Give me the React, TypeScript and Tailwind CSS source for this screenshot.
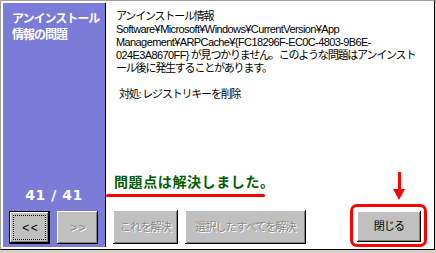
const jp = "font-['Liberation_Sans','Noto_Sans_CJK_JP',sans-serif]";

function ClassicButton({
  label,
  disabled,
  focused,
  className,
}: {
  label: string;
  disabled?: boolean;
  focused?: boolean;
  className?: string;
}) {
  return (
    <button
      type="button"
      disabled={disabled}
      className={`relative flex items-center justify-center whitespace-nowrap bg-[#c0c0c0] shadow-[inset_-1px_-1px_#000,inset_1px_1px_#fff,inset_-2px_-2px_#808080] ${
        disabled ? "text-[#8a8a8a] [text-shadow:1px_1px_#fff]" : "text-black"
      } ${focused ? "border border-black" : ""} ${className ?? ""}`}
    >
      {focused && (
        <span className="pointer-events-none absolute inset-[3px] border border-dotted border-black" />
      )}
      {label}
    </button>
  );
}

export default function App() {
  return (
    <div className={`h-[253px] w-[436px] overflow-hidden bg-[#d4d0c8] ${jp}`}>
      <div className="flex h-[250px] w-[435px] border-b border-l border-r border-t border-b-black border-l-[#a0a0a0] border-r-black border-t-[#a0a0a0] bg-white p-[2px]">
        {/* left panel */}
        <div className="flex w-[103px] shrink-0 flex-col border-r border-black bg-[#7b7bd8] px-[6px] pb-[3px] pt-[8px]">
          <p className="whitespace-nowrap px-[3px] text-[12px] font-bold leading-[16px] tracking-[-1px] text-white">
            アンインストール
            <br />
            情報の問題
          </p>
          <p className="mt-auto text-center font-['DejaVu_Sans',sans-serif] text-[14px] font-bold leading-[16px] tracking-[0.5px] text-white">
            41 / 41
          </p>
          <div className="mt-[8px] flex gap-[7px]">
            <ClassicButton label="< <" focused className="h-[33px] w-[41px] text-[12px] tracking-[-1px]" />
            <ClassicButton label="> >" disabled className="h-[33px] w-[41px] text-[12px] tracking-[-1px]" />
          </div>
        </div>

        {/* right content */}
        <div className="relative flex min-w-0 flex-1 flex-col pb-[3px]">
          <div className="whitespace-nowrap pl-[10px] pt-[7px] text-[11px] leading-[13px] tracking-[-1.2px] text-black">
            <p>アンインストール情報</p>
            <p className="tracking-[-0.6px]">Software¥Microsoft¥Windows¥CurrentVersion¥App</p>
            <p className="tracking-[-0.6px]">Management¥ARPCache¥{"{"}FC18296F-EC0C-4803-9B6E-</p>
            <p>
              <span className="tracking-[-0.6px]">024E3A8670FF{"}"}</span> が見つかりません。このような問題はアンインスト
            </p>
            <p>ール後に発生することがあります。</p>
            <p className="mt-[13px] pl-[3px]">対処: レジストリキーを削除</p>
          </div>

          <div className="mt-auto">
            <p className="pl-[8px] text-[14px] font-bold leading-[17px] tracking-[0.6px] text-[#006000]">
              問題点は解決しました。
            </p>
            <div className="mt-[3px] h-[3px] w-[159px] rounded-full bg-[#ff0000]" />
          </div>

          <div className="mt-[7px] flex items-end pl-[7px] pr-[5px]">
            <ClassicButton label="これを解決" disabled className="h-[34px] w-[65px] text-[11px] tracking-[-0.8px]" />
            <ClassicButton
              label="選択したすべてを解決"
              disabled
              className="ml-[7px] h-[34px] w-[121px] text-[11px] tracking-[-0.8px]"
            />
            <div className="ml-auto mb-[-3px] rounded-[7px] border-[3px] border-[#ff0000] p-[4px] pb-[2px] pr-[3px]">
              <ClassicButton label="閉じる" className="h-[31px] w-[64px] text-[11px] tracking-[-0.8px]" />
            </div>
          </div>

          {/* red arrow */}
          <div className="absolute left-[287px] top-[169px] flex flex-col items-center">
            <div className="h-[17px] w-[3px] bg-[#ff0000]" />
            <div className="h-0 w-0 border-l-[6px] border-r-[6px] border-t-[11px] border-l-transparent border-r-transparent border-t-[#ff0000]" />
          </div>
        </div>
      </div>
    </div>
  );
}
